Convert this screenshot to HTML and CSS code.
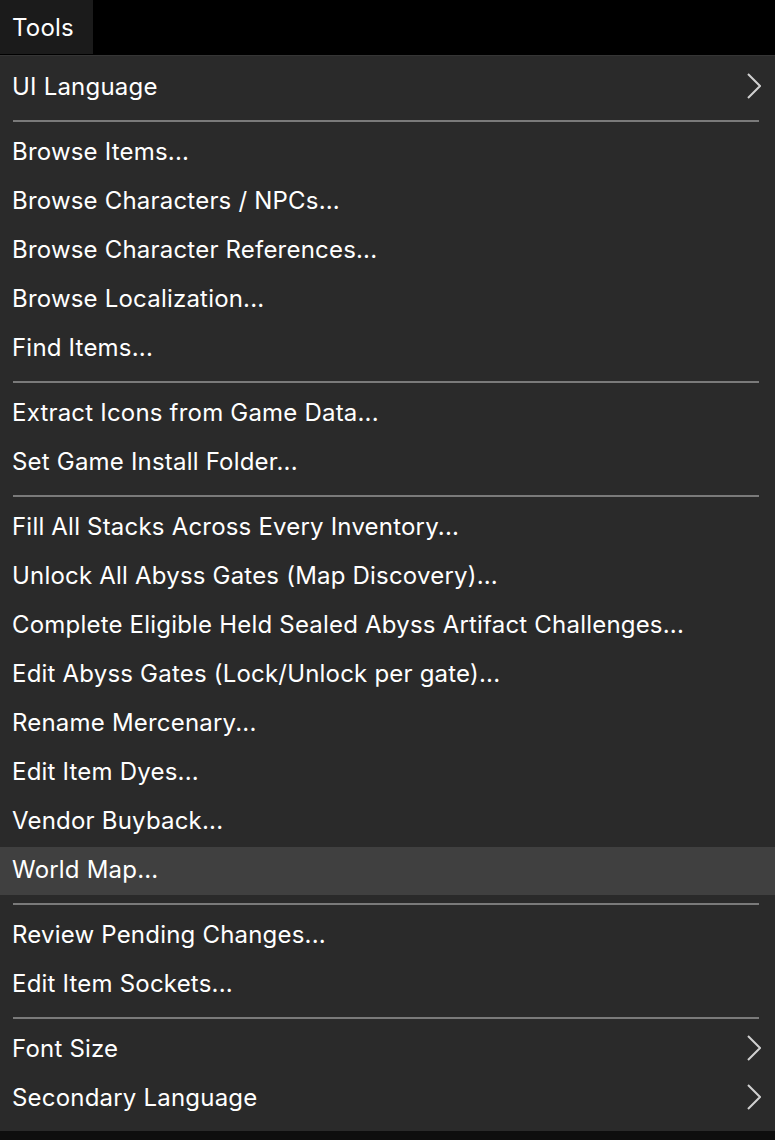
FILE: index.html
```html
<!DOCTYPE html>
<html>
	<head>
		<meta charset="utf-8">
		<title>Tools</title>
		<link rel="stylesheet" href="styles.css">
	</head>
	<body>
		<div id="menu-bar"><span class="bar-tab">Tools</span></div>
		<div id="menu">
			<div class="item sub">UI Language<svg class="chevron" width="14" height="26" viewBox="0 0 14 26"><polyline points="1,1 13,13 1,25" /></svg></div>
			<div class="sep"></div>
			<div class="item">Browse Items...</div>
			<div class="item">Browse Characters / NPCs...</div>
			<div class="item">Browse Character References...</div>
			<div class="item">Browse Localization...</div>
			<div class="item">Find Items...</div>
			<div class="sep"></div>
			<div class="item">Extract Icons from Game Data...</div>
			<div class="item">Set Game Install Folder...</div>
			<div class="sep"></div>
			<div class="item">Fill All Stacks Across Every Inventory...</div>
			<div class="item">Unlock All Abyss Gates (Map Discovery)...</div>
			<div class="item">Complete Eligible Held Sealed Abyss Artifact Challenges...</div>
			<div class="item">Edit Abyss Gates (Lock/Unlock per gate)...</div>
			<div class="item">Rename Mercenary...</div>
			<div class="item">Edit Item Dyes...</div>
			<div class="item">Vendor Buyback...</div>
			<div class="item hover">World Map...</div>
			<div class="sep"></div>
			<div class="item">Review Pending Changes...</div>
			<div class="item">Edit Item Sockets...</div>
			<div class="sep"></div>
			<div class="item sub">Font Size<svg class="chevron" width="14" height="26" viewBox="0 0 14 26"><polyline points="1,1 13,13 1,25" /></svg></div>
			<div class="item sub">Secondary Language<svg class="chevron" width="14" height="26" viewBox="0 0 14 26"><polyline points="1,1 13,13 1,25" /></svg></div>
		</div>
	</body>
</html>
```

FILE: styles.css
```css
body {
	margin: 0;
	background: #0e0e0e;
	font-family: Inter, "Noto Sans", sans-serif;
	font-size: 24px;
	letter-spacing: 0.2px;
	color: #ffffff;
}

#menu-bar {
	height: 55px;
	background: #000000;
	border-bottom: solid 1px #353535;
	display: flex;
}

.bar-tab {
	width: 93px;
	box-sizing: border-box;
	padding-left: 12px;
	background: #1b1b1b;
	line-height: 56px;
	height: 54px;
}

#menu {
	background: #2a2a2a;
	padding: 8px 0 7px;
}

.item {
	height: 48px;
	box-sizing: border-box;
	margin-bottom: 1px;
	padding: 0 14px 4px 12px;
	display: flex;
	align-items: center;
	justify-content: space-between;
	white-space: nowrap;
}

.item.hover {
	background: #404040;
}

.chevron {
	fill: none;
	stroke: #d0d0d0;
	stroke-width: 2;
}

/* top margin collapses with the item's 1px bottom margin */
.sep {
	height: 2px;
	background: #7a7a7a;
	margin: 8px 16px 7px 13px;
}
```
